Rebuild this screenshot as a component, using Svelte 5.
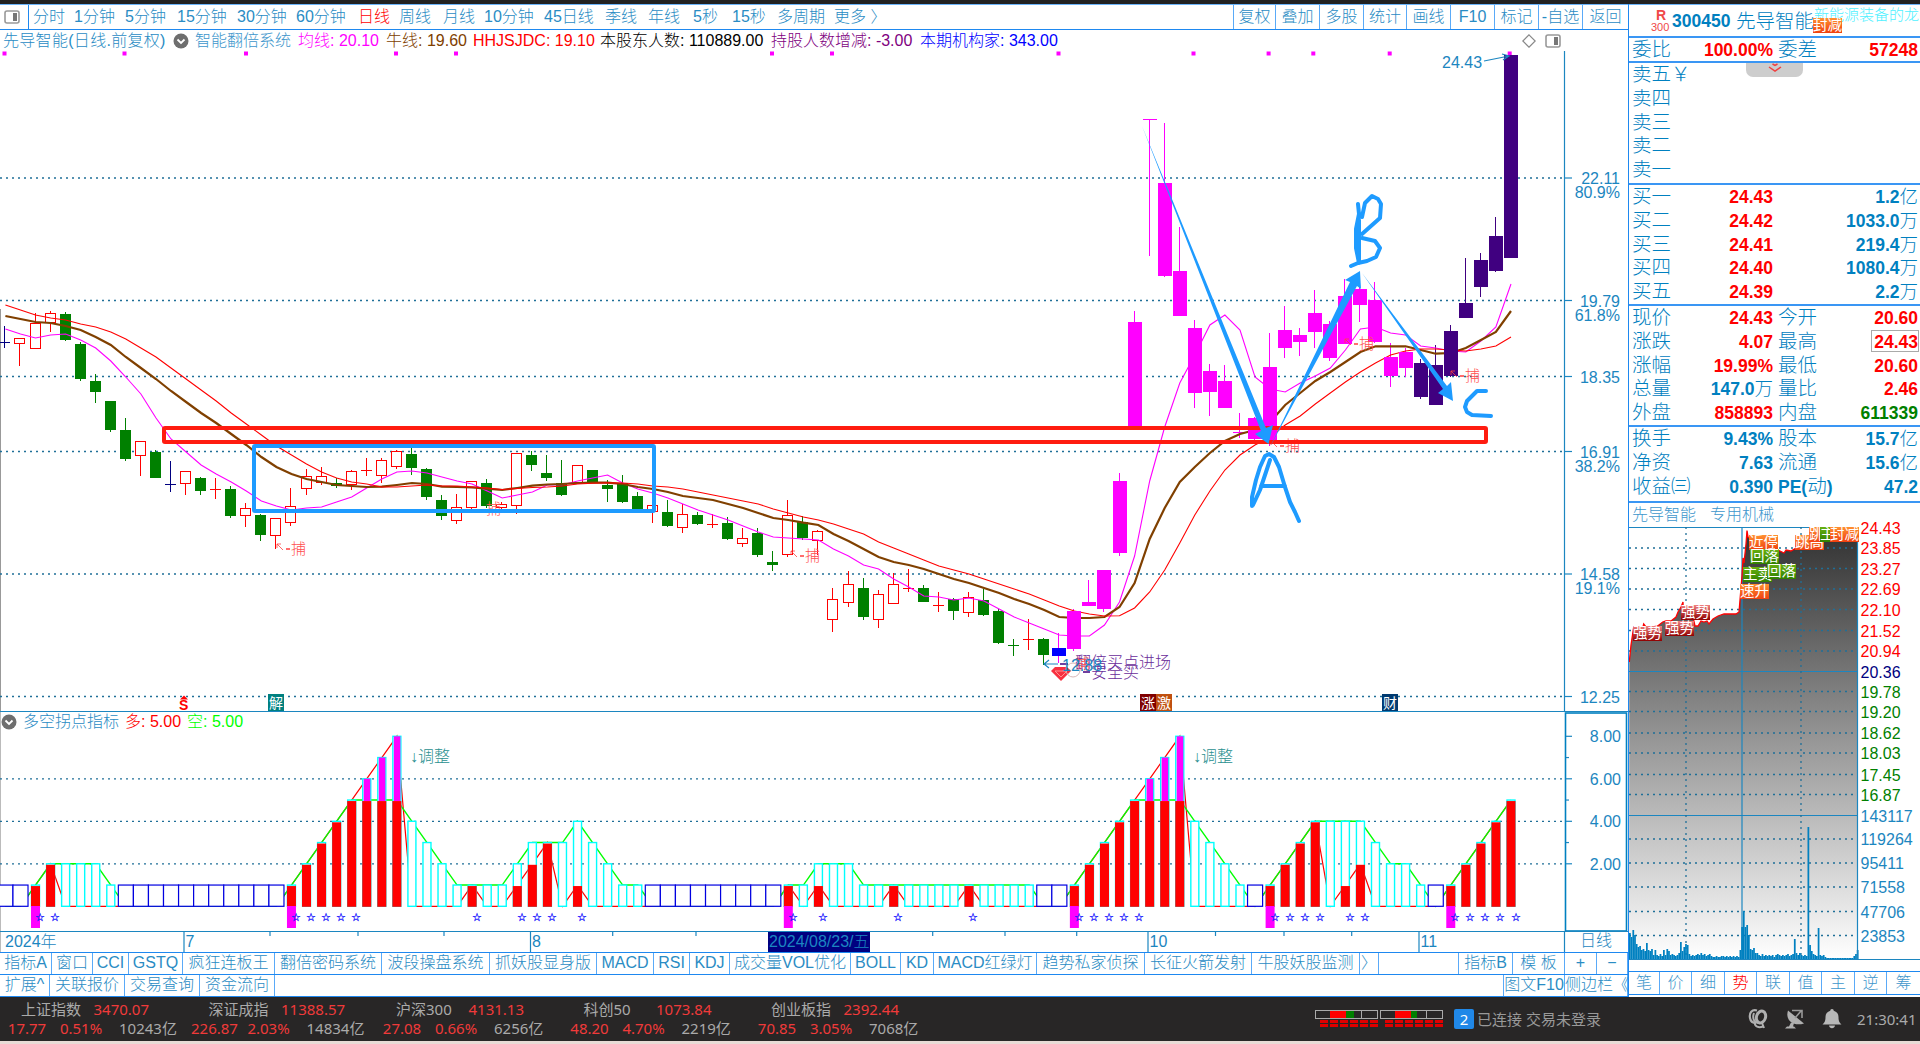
<script lang="ts">
	type Candle = [string, number, number, number, number];

	const STEP = 15.056;
	const FIRST = 5.4;
	const BASE = 906.3;
	const UNIT = 21.25;

	const cx = (i: number) => FIRST + STEP * i;
	const vy = (v: number) => BASE - UNIT * v;

	const periods = [
		"分时", "1分钟", "5分钟", "15分钟", "30分钟", "60分钟", "日线", "周线", "月线",
		"10分钟", "45日线", "季线", "年线", "5秒", "15秒", "多周期", "更多 〉",
	];
	const tools = ["复权", "叠加", "多股", "统计", "画线", "F10", "标记", "-自选", "返回"];

	const legend = [
		["智能翻倍系统", "#3d96cc"],
		["均线: 20.10", "#ff00ff"],
		["牛线: 19.60", "#804000"],
		["HHJSJDC: 19.10", "#ff0000"],
		["本股东人数: 110889.00", "#000000"],
		["持股人数增减: -3.00", "#800080"],
		["本期机构家: 343.00", "#0000ff"],
	];

	// kind, high, body top, body bottom, low
	const candles: Candle[] = [
		["n", 326, 342, 342, 348], ["r", 339, 339, 344, 366], ["r", 313, 324, 349, 349], ["r", 311, 314, 323, 332],
		["g", 312, 314, 340, 341], ["g", 342, 344, 379, 381], ["g", 374, 381, 392, 403], ["g", 401, 401, 430, 432],
		["g", 418, 430, 459, 461], ["r", 442, 442, 456, 476], ["g", 450, 452, 478, 478], ["n", 461, 484, 484, 492],
		["r", 472, 472, 484, 495], ["g", 477, 478, 491, 495], ["r", 478, 489, 490, 499], ["g", 486, 489, 516, 518],
		["r", 503, 509, 516, 527], ["g", 514, 515, 535, 541], ["r", 518, 519, 536, 549], ["r", 488, 507, 523, 526],
		["r", 469, 477, 489, 495], ["r", 467, 477, 483, 485], ["g", 478, 483, 486, 488], ["r", 470, 472, 485, 490],
		["r", 458, 470, 471, 476], ["r", 458, 461, 476, 483], ["r", 450, 452, 467, 469], ["g", 448, 454, 468, 475],
		["g", 468, 469, 497, 500], ["g", 495, 500, 516, 520], ["r", 494, 508, 521, 524], ["r", 481, 482, 508, 509],
		["g", 479, 483, 506, 508], ["r", 502, 505, 508, 510], ["r", 453, 454, 506, 514], ["g", 451, 455, 465, 471],
		["g", 455, 473, 478, 481], ["g", 460, 483, 495, 496], ["r", 465, 466, 483, 484], ["g", 470, 470, 482, 482],
		["g", 480, 485, 489, 502], ["g", 475, 483, 502, 503], ["g", 492, 496, 509, 513], ["r", 505, 506, 512, 523],
		["g", 500, 512, 526, 527], ["r", 504, 515, 528, 533], ["g", 512, 515, 524, 525], ["r", 514, 524, 525, 528],
		["g", 517, 523, 539, 540], ["r", 528, 539, 544, 547], ["g", 528, 533, 555, 557], ["g", 551, 562, 565, 571],
		["r", 500, 516, 555, 557], ["g", 516, 522, 538, 540], ["r", 530, 532, 541, 555], ["r", 588, 600, 620, 632],
		["r", 571, 585, 603, 607], ["g", 578, 588, 617, 620], ["r", 590, 595, 620, 628], ["r", 573, 585, 604, 604],
		["r", 569, 588, 588, 592], ["g", 585, 588, 602, 602], ["r", 592, 605, 605, 612], ["g", 598, 599, 611, 620],
		["r", 592, 598, 613, 617], ["g", 589, 600, 615, 616], ["g", 609, 611, 643, 644], ["g", 639, 645, 645, 656],
		["r", 619, 639, 640, 650], ["g", 638, 639, 655, 665], ["b", 633, 648, 656, 663], ["m", 609, 611, 649, 651],
		["m", 580, 602, 606, 606], ["m", 570, 570, 609, 612], ["m", 473, 481, 553, 556], ["m", 311, 322, 426, 426],
		["m", 119, 119, 119, 256], ["m", 123, 183, 276, 277], ["m", 227, 271, 316, 316], ["m", 320, 328, 393, 408],
		["m", 364, 371, 392, 416], ["m", 365, 381, 408, 408], ["m", 413, 432, 432, 438], ["m", 417, 418, 439, 440],
		["m", 333, 367, 440, 446], ["m", 306, 330, 348, 358], ["m", 328, 335, 342, 356], ["m", 290, 313, 332, 348],
		["m", 321, 324, 358, 361], ["m", 279, 296, 344, 344], ["m", 283, 289, 305, 322], ["m", 282, 300, 342, 343],
		["m", 343, 357, 376, 387], ["m", 348, 352, 368, 377], ["p", 359, 363, 397, 399], ["p", 345, 365, 405, 405],
		["p", 325, 331, 376, 377], ["p", 258, 303, 318, 318], ["p", 253, 260, 287, 297], ["p", 217, 236, 271, 272],
		["p", 55, 55, 258, 258],
	];
	const fills: Record<string, string> = {
		n: "#000080", r: "#ff0000", g: "#008000", b: "#0000ff", m: "#ff00ff", p: "#400080",
	};
	const wide = (k: string) => k === "m" || k === "p" || k === "b";

	const slow = [
		305, 310, 315, 318, 320, 324, 327, 332, 339, 348, 357, 368, 379, 390, 401, 413, 424, 435, 446, 455,
		464, 472, 478, 482, 484, 487, 487, 486, 485, 486, 486, 487, 488, 489.5, 488.5, 487.5, 487, 486, 484, 483.3,
		482.7, 483, 484, 486, 487, 489, 492, 495, 498, 501, 504, 509, 513, 517, 520, 524, 529, 534, 542, 548,
		554, 560, 566, 570, 574, 579, 584, 589, 594, 600, 606, 611, 614, 616, 615.7, 608, 592, 570, 543, 515,
		491, 470, 455, 445, 437, 425, 416, 404, 393, 382, 372, 363, 355, 351, 349, 349, 350, 351, 349, 346, 337,
	];
	const bull = [
		316, 319, 322, 323, 326, 330, 337, 345, 357, 368, 379, 391, 402, 413, 423, 434, 445, 457, 467, 474,
		479, 482, 485, 486, 487, 486.7, 485, 483, 484, 486.7, 487, 487.3, 488.7, 490, 488, 485.7, 484.5, 484, 483, 482.7,
		482.7, 484, 487, 489, 492, 496, 498, 500, 504, 508, 513, 518, 520, 522.7, 525, 534, 541, 549, 557, 562,
		565, 569, 574, 579, 583, 588, 593, 599, 604, 610, 617, 618, 618, 617, 607, 583, 539, 508, 482, 467,
		453, 441, 434, 430, 422, 405, 393, 381, 372, 362, 352, 346.3, 346.3, 346.3, 350, 353.7, 353, 348, 340, 332, 311,
	];
	const fast = [
		329, 334, 338, 335, 334, 340, 348, 361, 377, 394, 418, 439, 452, 465, 474, 482, 491, 501, 506, 510,
		508, 507, 502, 497, 488, 479, 472, 471, 473, 477, 481, 484, 491, 498, 495, 492, 485, 484.7, 481, 478,
		475, 483, 489, 493, 498, 504, 510, 515, 520, 526, 532, 537, 538, 539, 540, 549, 556, 565, 569, 579,
		587, 596, 597, 600, 598, 601, 609, 617, 623, 629, 635, 636, 636, 625, 602, 556, 481, 427, 383, 355,
		325, 315, 330, 377, 389, 392, 383, 376, 368, 350, 329, 327, 333, 335, 346, 348, 351, 352, 341, 327, 284,
	];
	const line = (ys: number[]) => ys.map((y, i) => `${cx(i).toFixed(1)},${y}`).join(" ");

	const dots = [4.5, 124.5, 246, 396, 456, 772, 832, 1058.5, 1193.5, 1268.6, 1313.3, 1389.7, 1509.7];
	const prices: [number, string, string][] = [
		[178, "22.11", "80.9%"], [300.5, "19.79", "61.8%"], [376.5, "18.35", ""],
		[451.5, "16.91", "38.2%"], [574, "14.58", "19.1%"], [696.5, "12.25", ""],
	];
	const catches = [[277, 547], [791, 554], [1271, 444], [1345, 342], [1451, 374]];
	const flags: [number, string, string][] = [
		[268, "解", "#008080"], [1140, "涨", "#800000"], [1156, "激", "#c05010"], [1382, "财", "#003a70"],
	];

	// count of each column: [bull, total]; null is a neutral cell
	const signals: ([number, number] | null)[] = [
		null, null, [1, 1], [2, 2], [0, 2], [0, 2], [0, 2], [0, 1],
		...Array(11).fill(null),
		[1, 1], [2, 2], [3, 3], [4, 4], [5, 5], [6, 6], [7, 7], [8, 8],
		[0, 4], [0, 3], [0, 2], [0, 1], [1, 1], [0, 1], [0, 1], [1, 2], [2, 3], [3, 3], [0, 3], [1, 4],
		[0, 3], [0, 2], [0, 1], [0, 1],
		...Array(9).fill(null),
		[1, 1], [0, 1], [1, 2], [0, 2], [0, 2], [0, 1], [0, 1], [1, 1], [0, 1], [0, 1], [0, 1], [0, 1],
		[1, 1], [0, 1], [0, 1], [0, 1], [0, 1], null, null,
		[1, 1], [2, 2], [3, 3], [4, 4], [5, 5], [6, 6], [7, 7], [8, 8],
		[0, 4], [0, 3], [0, 2], [0, 1], null,
		[1, 1], [2, 2], [3, 3], [4, 4], [0, 4], [1, 4], [2, 4], [0, 3], [0, 2], [0, 2], [0, 1], null,
		[1, 1], [2, 2], [3, 3], [4, 4], [5, 5],
	];
	const starts = [2, 19, 52, 71, 84, 96];
	const bullLine = signals.map((s, i) => `${cx(i).toFixed(1)},${vy(s ? s[0] : 0)}`).join(" ");
	const bearLine = signals.map((s, i) => `${cx(i).toFixed(1)},${vy(s ? Math.min(s[1], 5) : 0)}`).join(" ");

	const months: [number, string][] = [[184, "7"], [530.5, "8"], [1148, "10"], [1419, "11"]];
	const weeks = [270, 358, 444, 612.7, 696, 932.7, 1005, 1076.7, 1215.5, 1284, 1351.7];

	const indicators = [
		"指标A", "窗口", "CCI", "GSTQ", "疯狂连板王", "翻倍密码系统", "波段操盘系统", "抓妖股显身版", "MACD",
		"RSI", "KDJ", "成交量VOL优化", "BOLL", "KD", "MACD红绿灯", "趋势私家侦探", "长征火箭发射", "牛股妖股监测",
		"〉", "", "指标B", "模 板", "+", "−",
	];
	const extras = ["扩展^", "关联报价", "交易查询", "资金流向", "", "图文F10", "侧边栏《"];

	const asks = ["卖五￥", "卖四", "卖三", "卖二", "卖一"];
	const bids = [
		["买一", "24.43", "red", "", "1.2亿", ""],
		["买二", "24.42", "red", "", "1033.0万", ""],
		["买三", "24.41", "red", "", "219.4万", ""],
		["买四", "24.40", "red", "", "1080.4万", ""],
		["买五", "24.39", "red", "", "2.2万", ""],
	];
	const quotes = [
		["现价", "24.43", "red", "今开", "20.60", "red"],
		["涨跌", "4.07", "red", "最高", "24.43", "red boxed"],
		["涨幅", "19.99%", "red", "最低", "20.60", "red"],
		["总量", "147.0万", "", "量比", "2.46", "red"],
		["外盘", "858893", "red", "内盘", "611339", "green"],
	];
	const finance = [
		["换手", "9.43%", "", "股本", "15.7亿", ""],
		["净资", "7.63", "", "流通", "15.6亿", ""],
		["收益㈢", "0.390", "", "PE(动)", "47.2", ""],
	];

	const trend =
		"0.3,135 2,118 4.7,100 7,101 10,100 13.7,101 14.7,97 17,100 20,101 24,100 28.7,99 33.7,95 37,94 42,94 47,90 " +
		"49,85 52,80 54,75 54.3,85 57,88 64,90 66,99 69,99 72,94 75,95 78,94 80,97 84,92 89,89 95,87 107,87 110,85 " +
		"111,73 113,49 114,31 115,36 117,17 118,3.5 119,10 125,14 139,17 149,23 155,26 157,23 162,24 167,21 177,19 " +
		"182,14 185,5 189,7 192,1 229,1";
	const levels: [number, string, string][] = [
		[0.5, "24.43", "#ff0000"], [21, "23.85", "#ff0000"], [41.5, "23.27", "#ff0000"], [62, "22.69", "#ff0000"],
		[82.5, "22.10", "#ff0000"], [103.5, "21.52", "#ff0000"], [124, "20.94", "#ff0000"], [144.5, "20.36", "#000080"],
		[164.5, "19.78", "#008000"], [184.5, "19.20", "#008000"], [206, "18.62", "#008000"], [226, "18.03", "#008000"],
		[247.5, "17.45", "#008000"], [267.5, "16.87", "#008000"], [288.5, "143117", "#1c86c0"], [312, "119264", "#1c86c0"],
		[336, "95411", "#1c86c0"], [360, "71558", "#1c86c0"], [384.5, "47706", "#1c86c0"], [408.5, "23853", "#1c86c0"],
	];
	const volumes = [
		26, 22, 29, 24, 15, 12, 13, 9, 10, 8, 16, 9, 8, 10, 4, 9, 4, 3, 5, 3, 9, 4, 10, 8, 4, 5, 4, 3, 4, 6, 17, 8, 12,
		15, 14, 5, 3, 4, 3, 4, 5, 4, 6, 4, 5, 3, 4, 5, 3, 2, 2, 3, 2, 2, 3, 3, 2, 3, 2, 3, 2, 3, 2, 3, 2, 9, 32,
		48, 32, 34, 24, 10, 9, 11, 6, 6, 4, 3, 5, 3, 4, 3, 4, 3, 4, 2, 4, 5, 4, 3, 4, 3, 4, 5, 3, 4, 5, 20, 6, 4, 6,
		4, 3, 4, 3, 132, 14, 8, 5, 4, 3, 31, 4, 3, 4, 2, 1, 1, 1, 1, 1, 1, 1, 1, 1, 1, 1, 1, 1, 1, 1, 1, 3, 5, 9,
	];
	// x, y, text, colour class
	const alerts: [number, number, string, string][] = [
		[4, 99, "强势", "dark"], [36, 94, "强势", "dark"], [52, 78, "强势", "dark"], [120, 8, "近停", "hot"],
		[121, 22, "回落", "leaf"], [114, 40, "主卖", "leaf"], [138, 37, "回落", "leaf"], [111, 57, "速升", "hot"],
		[166, 8, "跳高", "hot"], [180, 0, "跳", "hot"], [191, 0, "主", "leaf"], [201, 0, "封减", "hot"],
	];
	const sideTabs = ["笔", "价", "细", "势", "联", "值", "主", "逆", "筹"];

	const indices = [
		["上证指数", "3470.07", "17.77", "0.51%", "10243亿"],
		["深证成指", "11388.57", "226.87", "2.03%", "14834亿"],
		["沪深300", "4131.13", "27.08", "0.66%", "6256亿"],
		["科创50", "1073.84", "48.20", "4.70%", "2219亿"],
		["创业板指", "2392.44", "70.85", "3.05%", "7068亿"],
	];
</script>

{#snippet chevron()}
	<svg class="chevron" viewBox="0 0 16 16" width="16" height="16">
		<circle cx="8" cy="8" r="7.5" fill="#6e6e6e" />
		<path d="M4.5 6.5 8 10l3.5-3.5" fill="none" stroke="#fff" stroke-width="1.8" />
	</svg>
{/snippet}

{#snippet panelIcon()}
	<svg viewBox="0 0 16 14" width="16" height="14">
		<rect x="1" y="1" width="14" height="12" rx="2" fill="#fff" stroke="#999" stroke-width="1.6" />
		<rect x="9" y="3" width="4" height="8" fill="#777" />
	</svg>
{/snippet}

{#snippet amount(text: string, tone: string)}
	<b class={tone}>{text.replace(/[万亿]/, "")}<i>{text.match(/[万亿]/)?.[0] ?? ""}</i></b>
{/snippet}

{#snippet rows(list: string[][])}
	{#each list as [a, av, ac, b, bv, bc]}
		<div class="quote">
			<span>{a}</span>
			{@render amount(av, ac)}
			<span class="second">
				{#if b.startsWith("PE")}<b>PE(</b>动<b>)</b>{:else}{b}{/if}
			</span>
			{@render amount(bv, bc)}
		</div>
	{/each}
{/snippet}

<div class="terminal">
	<div class="titlebar"></div>
	<div class="main">
		<section class="left">
			<nav class="toolbar">
				<div class="layout">{@render panelIcon()}</div>
				<div class="periods">
					{#each periods as p}
						<span class:active={p === "日线"}>{p}</span>
					{/each}
				</div>
				<div class="tools">
					{#each tools as t}<span>{t}</span>{/each}
				</div>
			</nav>

			<div class="legend">
				<span class="stock">先导智能(日线.前复权)</span>
				{@render chevron()}
				{#each legend as [text, color]}
					<span style="color: {color}">{text}</span>
				{/each}
				<svg class="diamond" viewBox="0 0 14 14" width="14" height="14">
					<path d="M7 .8 13.2 7 7 13.2.8 7z" fill="none" stroke="#888" stroke-width="1.2" />
				</svg>
				{@render panelIcon()}
			</div>

			<svg class="kline" viewBox="0 51 1628 660" width="1628" height="660">
				<path d="M.5 309V711" stroke="#999" />
				{#each prices as [y, price, percent]}
					<path class="grid" d="M0 {y}H1562" />
					<path class="axis" d="M1565 {y}h7" />
					<text class="num" x="1620" y={y + 6} text-anchor="end">{price}</text>
					<text class="num" x="1620" y={y + 20} text-anchor="end">{percent}</text>
				{/each}
				<path class="axis" d="M1564.5 51V711" />

				{#each dots as x}
					<rect x={x - 2} y="51.5" width="4" height="4" fill="#ff00ff" />
				{/each}

				{#each candles as [kind, high, top, bottom, low], i}
					{@const x = Math.round(cx(i)) - 0.5}
					<path d="M{x} {high}V{low}" stroke={kind === "b" ? "#ff00ff" : fills[kind]} />
					{#if kind === "r" && bottom - top > 1}
						<rect x={x - 5} y={top - 0.5} width="10" height={bottom - top} fill="#fff" stroke="#ff0000" />
					{:else if wide(kind)}
						<rect x={x - 6.5} y={top} width="14" height={Math.max(bottom - top, 1)} fill={fills[kind]} />
					{:else}
						<rect x={x - 5.5} y={top} width="11" height={Math.max(bottom - top, 1)} fill={fills[kind]} />
					{/if}
				{/each}

				<polyline points={line(fast)} fill="none" stroke="#ff00ff" stroke-width="1.1" />
				<polyline points={line(bull)} fill="none" stroke="#804000" stroke-width="2.2" />
				<polyline points={line(slow)} fill="none" stroke="#ff0000" stroke-width="1.1" />
				<!-- limit-up bodies hide the averages -->
				{#each candles as [kind, , top, bottom], i}
					{#if (kind === "m" || kind === "p") && bottom - top > 1}
						<rect x={Math.round(cx(i)) - 7} y={top} width="14" height={bottom - top} fill={fills[kind]} />
					{/if}
				{/each}

				<text class="catch" x="486" y="514">捕</text>
				{#each catches as [x, y]}
					<path d="M{x} {y - 3}v4m0-4h4m-4 0 6 6" fill="none" stroke="#ff4040" stroke-width=".8" />
					<path d="M{x + 9} {y + 2}h4" stroke="#ff2020" stroke-width="1.3" />
					<text class="catch" x={x + 14} y={y + 7}>捕</text>
				{/each}

				<text class="num" x="1442" y="68">24.43</text>
				<path d="M1484 61 1509 56m-7-2 7 2-6 4" class="axis" fill="none" />

				<path d="M1055 667h12l4 4-10 10-10-10z" fill="#f83040" />
				<path d="M1055 671h12l-6 6z" fill="none" stroke="#ff9090" />
				<circle cx="1073" cy="670" r="7" fill="none" stroke="#d8b8b8" />
				<text class="signal" x="1075" y="668">翻倍买点进场</text>
				<text class="signal" x="1091" y="678">安全买</text>
				<path d="M1060 664h8m15 8h7" stroke="#400080" stroke-width="1.5" />
				<text x="1075" y="669" class="catch">捕</text>
				<path d="M1044 664h14m-9-4-5 4 5 4" class="axis" fill="none" />
				<text class="num" x="1062" y="671">12.88</text>

				<text x="179" y="710" class="split">S</text>
				<path d="M180 699.500l4-4 4 4z" fill="#f00" />
				{#each flags as [x, text, color]}
					<rect {x} y="694" width="16" height="17" fill={color} />
					<text class="flag" x={x + 1} y="708">{text}</text>
				{/each}

				<rect x="164" y="428" width="1322" height="14" rx="1" fill="none" stroke="#ff1c10" stroke-width="4" />
				<rect x="254" y="446" width="400" height="65" rx="1" fill="none" stroke="#1e9bff" stroke-width="4" />
				<g fill="#1e9bff">
					<path d="M1142 126 1266 428 1273 425 1268.500 444 1255 434 1261 431z" />
					<path d="M1270 447 1350 282 1345 280 1360 271 1361 289 1357 286z" />
					<path d="M1362 273 1447 386 1451 382 1453 401 1438 393 1443 389z" />
				</g>
				<g fill="none" stroke="#1e9bff" stroke-width="4" stroke-linecap="round" stroke-linejoin="round">
					<path d="M1252 506v-9l4-17 4-13 5-11 4-2 5 3 5 10 6 20 5 15 5 10 4 9M1270 460l-4 12-6 18-7 15M1261 486h24" />
					<path d="M1358 204l1 10-3 15v19l3 15V220M1357 230v16M1362 217l3-14 7-7 6 3 3 5-1 14-18 16M1362 238l13 3 5 7-4 9-9 4-9 2-7 3" />
					<path d="M1486 391h-9l-10 10-2 6 2 5 5 3 19 1" />
				</g>
			</svg>

			<div class="sub">
				<div class="subtitle">
					{@render chevron()}
					<span>多空拐点指标</span>
					<span class="red">多: 5.00</span>
					<span class="lime">空: 5.00</span>
				</div>
				<svg viewBox="0 711 1628 241" width="1628" height="241">
					<path class="axis" d="M0 711.500H1628" />
					<path d="M.5 712V952" stroke="#bbb" />
					{#each [2, 4, 6] as v}
						<path class="grid" d="M0 {vy(v)}H1562" />
					{/each}
					<polyline points={bullLine} fill="none" stroke="#ff0000" stroke-width="1.2" />
					<polyline points={bearLine} fill="none" stroke="#00ff00" stroke-width="1.4" />
					{#each signals as s, i}
						{@const x = cx(i)}
						{#if !s}
							<rect x={x - 7.5} y={vy(1)} width="15.056" height={UNIT} fill="#fff" stroke="#0000e0" stroke-width="1.2" />
						{:else}
							<rect x={x - 4} y={vy(s[1])} width="8" height={UNIT * s[1]} fill="#fff" stroke="#00ffff" stroke-width="1.4" />
							{#if s[0] > 5}
								<rect x={x - 3} y={vy(s[0])} width="6.500" height={UNIT * (s[0] - 5) + 1} fill="#ff00ff" />
							{/if}
							{#if s[0]}
								<rect x={x - 4.5} y={vy(Math.min(s[0], 5)) + 1} width="9" height={UNIT * Math.min(s[0], 5) - 0.5} fill="#ff0000" />
							{/if}
							{#if starts.includes(i)}
								<rect x={x - 4.5} y="906" width="9" height="22" fill="#ff00ff" />
							{/if}
							{#if s[0] && s[0] <= 5}
								<text class="star" x={x + 4.500} y="920.500" text-anchor="middle">☆</text>
							{/if}
						{/if}
					{/each}
					<text class="adjust" x="410" y="762">↓调整</text>
					<text class="adjust" x="1193" y="762">↓调整</text>

					<rect x="1565.500" y="713" width="61" height="218" fill="none" stroke="#0080c0" stroke-width="1.6" />
					{#each [8, 7, 6, 5, 4, 3, 2] as v}
						<path class="axis" d="M1566 {vy(v)}h{v % 2 ? 3 : 6}" />
						{#if v % 2 === 0}
							<text class="num" x="1621" y={vy(v) + 6} text-anchor="end">{v}.00</text>
						{/if}
					{/each}

					<path class="axis" d="M0 931.500H1628M1564.500 931V952" />
					<text class="num" x="5" y="947">2024年</text>
					{#each months as [x, text]}
						<path class="axis" d="M{x} 932V952" />
						<text class="num" x={x + 1.500} y="947">{text}</text>
					{/each}
					{#each weeks as x}
						<path class="axis" d="M{x} 932v4" />
					{/each}
					<rect x="768" y="932" width="102" height="20" fill="#000080" />
					<text class="num" x="769" y="947">2024/08/23/五</text>
					<text class="num" x="1596" y="946" text-anchor="middle">日线</text>
				</svg>
			</div>

			<div class="tabs">
				{#each indicators as t}<span>{t}</span>{/each}
			</div>
			<div class="tabs extra">
				{#each extras as t}<span>{t}</span>{/each}
			</div>
		</section>

		<aside class="right">
			<header>
				<div class="margin"><b>R</b><span>300</span></div>
				<b class="code">300450</b>
				<span class="name">先导智能</span>
				<span class="slogan">新能源装备的龙头</span>
				<span class="alert hot seal">封减</span>
			</header>
			<div class="block one">
				{@render rows([["委比", "100.00%", "red", "委差", "57248", "red"]])}
			</div>
			<div class="block asks">
				<div class="handle">
					<svg viewBox="0 0 14 10" width="14" height="10" fill="none" stroke="#f04040" stroke-width="1.5">
						<path d="M1 4l6 4 6-4M4.500 1 7 2.500 9.500 1" />
					</svg>
				</div>
				{#each asks as a}<div class="quote"><span>{a}</span></div>{/each}
			</div>
			<div class="block">{@render rows(bids)}</div>
			<div class="block">{@render rows(quotes)}</div>
			<div class="block finance">{@render rows(finance)}</div>

			<div class="industry"><span>先导智能</span><span>专用机械</span></div>
			<div class="trend">
				<svg viewBox="0 0 292 446" width="292" height="446">
					<defs>
						<linearGradient id="shade" gradientUnits="userSpaceOnUse" x1="0" y1="0" x2="0" y2="432">
							<stop offset="0" stop-color="#303030" />
							<stop offset="1" stop-color="#ffffff" />
						</linearGradient>
					</defs>
					<polygon points="0,432 {trend} 229,432" fill="url(#shade)" />
					{#each levels as [y, text, color], i}
						{#if i === 7 || i === 14 || i === 0}
							<path class="axis" d="M0 {y}H229" />
						{:else}
							<path class="grid" d="M0 {y}H229" />
						{/if}
						<text x="231.500" y={y + 6} fill={color}>{text}</text>
					{/each}
					<path class="grid" d="M57 0V432M172 0V432" />
					<path class="axis" d="M113 0V432" />
					<polyline points={trend} fill="none" stroke="#ff0000" stroke-width="1.3" />
					{#each volumes as v, i}
						<rect x={i * 1.7} y={432 - v} width="1.75" height={v} fill="#0080c0" />
					{/each}
					<path class="axis" d="M0 432.500H292M228.500 0V432" />
				</svg>
				{#each alerts as [x, y, text, tone]}
					<span class="alert {tone}" style="left: {x}px; top: {y}px">{text}</span>
				{/each}
			</div>
			<div class="sidetabs">
				{#each sideTabs as t}<span class:active={t === "势"}>{t}</span>{/each}
			</div>
		</aside>
	</div>

	<footer>
		<div class="indices">
			{#each indices as [name, value, change, percent, total]}
				<div class="index">
					<div class="head"><span>{name}</span><em>{value}</em></div>
					<div class="detail"><em>{change}</em><em>{percent}</em><span>{total}</span></div>
				</div>
			{/each}
		</div>
		<svg class="gauge" viewBox="0 0 130 18" width="130" height="18" shape-rendering="crispEdges">
			{#each [0, 65] as x}
				<rect x={x + 0.5} y=".5" width="62" height="8" fill="none" stroke="#aaa" />
				<rect x={x + 15} y="1" width="16" height="7" fill="#ff0000" />
				<rect x={x + 31} y="1" width={x ? 6 : 8} height="7" fill="#008000" />
				<path d="M{x + 46.500} 0V9" stroke="#aaa" />
				{#each [0, 1, 2, 3, 4, 5] as n}
					<rect x={x + 5 + n * 10} y="10" width="8" height="3" fill="#e00000" />
					<rect x={x + 5 + n * 10} y="14" width="8" height="3" fill="#e00000" />
				{/each}
			{/each}
		</svg>
		<span class="count">2</span>
		<span class="state">已连接 交易未登录</span>
		<div class="tray">
			<svg viewBox="0 0 20 20" width="20" height="20" fill="none" stroke="#b0b0b0">
				<ellipse cx="13" cy="8" rx="4.500" ry="6" stroke-width="3" transform="rotate(18 13 8)" />
				<path d="M9 1.500C4 0 1 4 2 9c.5 3 3 5 6 5" stroke-width="2.200" />
				<path d="M6 4c-2 5 0 10 5 10M14 14l2 5M7 13c-1 5 4 6 8 4.500" stroke-width="2" />
			</svg>
			<svg viewBox="0 0 20 20" width="20" height="20">
				<path d="M3 1.500C0 10 7 18 19 14.500z" fill="#b0b0b0" />
				<path d="M7 1.500h10V9M10 9l6-7" fill="none" stroke="#999" stroke-width="1.600" />
				<path d="M0 19.500 2 17.500h2l2-4 3 .5-1 3.500h1l2 2z" fill="#b0b0b0" />
			</svg>
			<svg viewBox="0 0 20 20" width="20" height="20" fill="#b8b8b8">
				<path d="M10 0c1.200 0 1.700.8 1.700 1.800C14.800 2.700 16.500 5 16.500 8c0 4 .8 5.500 3 7.500H.5c2.200-2 3-3.500 3-7.500 0-3 1.700-5.300 4.800-6.200C8.300.8 8.800 0 10 0zM7 16.500h6c-.3 1.800-1.500 2.800-3 2.800s-2.700-1-3-2.800z" />
			</svg>
		</div>
		<time>21:30:41</time>
	</footer>
</div>

<style>
	:global(body) {
		overflow: hidden;
	}

	.terminal {
		display: flex;
		flex-direction: column;
		width: 1920px;
		height: 1044px;
		overflow: hidden;
		background: #e9dbd6;
		color: #2a8cc4;
		font-family: "Liberation Sans", "Noto Sans CJK SC", sans-serif;
		font-size: 16px;
		font-weight: 300;
		line-height: 20px;
		white-space: nowrap;
	}

	.titlebar {
		height: 4px;
		background: #222;
	}

	.main {
		display: flex;
		height: 993px;
		background: #fff;
	}

	.left {
		width: 1628px;
		flex: none;
	}

	b {
		font-weight: 700;
	}

	svg {
		display: block;
		flex: none;
	}

	.red,
	.active {
		color: #ff0000;
	}

	.green {
		color: #008000;
	}

	.lime {
		color: #00ff00;
	}

	/* toolbar */
	.toolbar {
		display: flex;
		box-sizing: border-box;
		height: 26px;
		border-top: 1px solid #6bb4fa;
		border-bottom: 1px solid #1e88f0;
		line-height: 24px;
	}

	.layout {
		display: flex;
		align-items: center;
		width: 24px;
		padding-left: 4px;
		border-right: 1px solid #1e88f0;
	}

	.periods {
		display: grid;
		flex: 1;
		padding-left: 4px;
		grid-template-columns: 41px 51px 52px 60px 59px 62px 41px 44px 41px 60px 61px 43px 45px 39px 45px 57px auto;
	}

	.tools {
		display: grid;
		grid-template-columns: 42px 44px 44px 43px 44px 44px 44px 44px 46px;
		text-align: center;
	}

	.tools span {
		border-left: 1px solid #5aaaf8;
	}

	.legend {
		display: grid;
		grid-template-columns: 170px 22px 103px 88px 87px 127px 171px 149px 602px 23px 20px;
		align-items: center;
		height: 21px;
		padding-left: 3px;
	}

	.stock {
		letter-spacing: 0.3px;
	}

	.kline .grid,
	.sub .grid,
	.trend .grid {
		fill: none;
		stroke: #1f6f98;
		stroke-width: 1.3;
		stroke-dasharray: 2 4;
	}

	.axis {
		stroke: #1c86c0;
		stroke-width: 1.2;
	}

	.num {
		fill: #1c86c0;
	}

	.catch {
		fill: #ff5050;
		font-size: 15px;
	}

	.signal {
		fill: #6a2c9a;
	}

	.split {
		fill: #ff0000;
		font-size: 14px;
		font-weight: bold;
	}

	.flag {
		fill: #fff;
		font-size: 14px;
		font-weight: 400;
	}

	.sub {
		position: relative;
	}

	.subtitle {
		position: absolute;
		top: 1px;
		left: 1px;
		display: flex;
		align-items: center;
		gap: 6px;
	}

	.star {
		fill: #2020ff;
		stroke: #2020ff;
		stroke-width: 0.3;
		font-family: "DejaVu Sans", sans-serif;
		font-size: 11px;
	}

	.adjust {
		fill: #2a9090;
	}

	/* indicator tabs */
	.tabs {
		display: grid;
		box-sizing: border-box;
		height: 22px;
		border-top: 1px solid #1e88f0;
		line-height: 20px;
		text-align: center;
		grid-template-columns:
			52px 41px 36px 54px 92px 107px 108px 107px 57px 36px 40px 121px 50px 33px 103px 108px 107px 108px
			19px 80px 54px 52px 32px 31px;
	}

	.tabs span {
		border-right: 1px solid #5aaaf8;
	}

	.extra {
		height: 23px;
		border-bottom: 1px solid #1e88f0;
		grid-template-columns: 50px 75px 75px 75px 1229px 61px 63px;
	}

	/* quote panel */
	.right {
		display: flex;
		flex: 1;
		flex-direction: column;
		box-sizing: border-box;
		overflow: hidden;
		border-left: 1px solid #1e88f0;
		color: #0080c0;
	}

	header {
		position: relative;
		display: flex;
		align-items: center;
		box-sizing: border-box;
		height: 32px;
		padding-left: 22px;
		border-top: 1px solid #6bb4fa;
	}

	header > * {
		flex: none;
	}

	.margin {
		display: flex;
		flex-direction: column;
		width: 21px;
		color: #f04848;
		font-size: 11px;
		line-height: 12px;
	}

	.margin b {
		padding-left: 5px;
		font-size: 14px;
	}

	.code {
		width: 64px;
		font-size: 17.5px;
	}

	.name {
		font-size: 19.5px;
	}

	.slogan {
		align-self: flex-start;
		color: #50f0ff;
		font-size: 15px;
	}

	.alert {
		position: absolute;
		color: #fff;
		font-size: 14.5px;
		font-weight: 400;
		line-height: 15px;
	}

	.hot {
		background: linear-gradient(#ff9030, #f04010);
	}

	.leaf {
		background: linear-gradient(#68b010, #308000);
	}

	.dark {
		background: linear-gradient(#f08080, #900000);
	}

	.seal {
		top: 13px;
		left: 184px;
	}

	.block {
		display: flex;
		flex-direction: column;
		box-sizing: border-box;
		height: 121px;
		border-top: 2px solid #3a96f4;
		font-size: 19.5px;
		line-height: 23.8px;
	}

	.one {
		height: 25px;
	}

	.asks {
		position: relative;
		height: 122px;
	}

	.finance {
		height: 76px;
	}

	.handle {
		position: absolute;
		top: 0;
		left: 117px;
		display: flex;
		justify-content: center;
		width: 57px;
		height: 14px;
		border-radius: 0 0 7px 7px;
		background: #cdcdcd;
	}

	.quote {
		display: grid;
		grid-template-columns: 66px 75px 58px 87px;
		height: 23.8px;
		padding-left: 3px;
	}

	.quote b {
		font-size: 17.5px;
		text-align: right;
	}

	.quote i {
		font-size: 18.5px;
		font-style: normal;
		font-weight: 300;
	}

	.second {
		padding-left: 5px;
	}

	.boxed {
		justify-self: end;
		height: 20px;
		margin-top: 1px;
		padding-left: 2px;
		line-height: 21px;
		outline: 1px solid #aaa;
	}

	.industry {
		display: flex;
		gap: 14px;
		box-sizing: border-box;
		height: 26px;
		padding: 2px 3px;
		border-top: 2px solid #3a96f4;
		color: #3d96cc;
	}

	.trend {
		position: relative;
		height: 444px;
		font-weight: 400;
	}

	.trend > svg {
		overflow: visible;
	}

	.sidetabs {
		display: grid;
		box-sizing: border-box;
		height: 24px;
		border-top: 1px solid #1e88f0;
		border-bottom: 1px solid #1e88f0;
		color: #3d96cc;
		line-height: 21px;
		text-align: center;
		grid-template-columns: 31px 32px 33px 32px 33px 32px 33px 32px 34px;
	}

	.sidetabs span {
		border-right: 1px solid #5aaaf8;
	}

	.sidetabs .active {
		color: #ff0000;
	}

	/* status bar */
	footer {
		display: flex;
		align-items: center;
		height: 44px;
		background: #282626;
		color: #aaa;
		font-family: "Noto Sans", "Noto Sans CJK SC", sans-serif;
		font-size: 15px;
		font-weight: 400;
	}

	.indices {
		display: grid;
		width: 1315px;
		grid-template-columns: repeat(5, 187.5px);
		line-height: 19px;
	}

	.index div {
		display: grid;
	}

	.head {
		padding-left: 21px;
		grid-template-columns: 72.5px auto;
	}

	.index .detail {
		grid-template-columns: 54px 54px auto;
		column-gap: 0;
	}

	.detail em {
		text-align: center;
	}

	.detail span {
		padding-left: 11px;
	}

	em {
		color: #f03a3a;
		font-style: normal;
	}

	.count {
		width: 20px;
		height: 20px;
		margin-left: 9px;
		border-radius: 2px;
		background: #2088e8;
		color: #fff;
		text-align: center;
	}

	.state {
		margin-left: 3px;
		color: #999;
	}

	.tray {
		display: flex;
		gap: 17px;
		margin-left: auto;
		margin-right: 15px;
	}

	time {
		width: 63px;
	}
</style>
